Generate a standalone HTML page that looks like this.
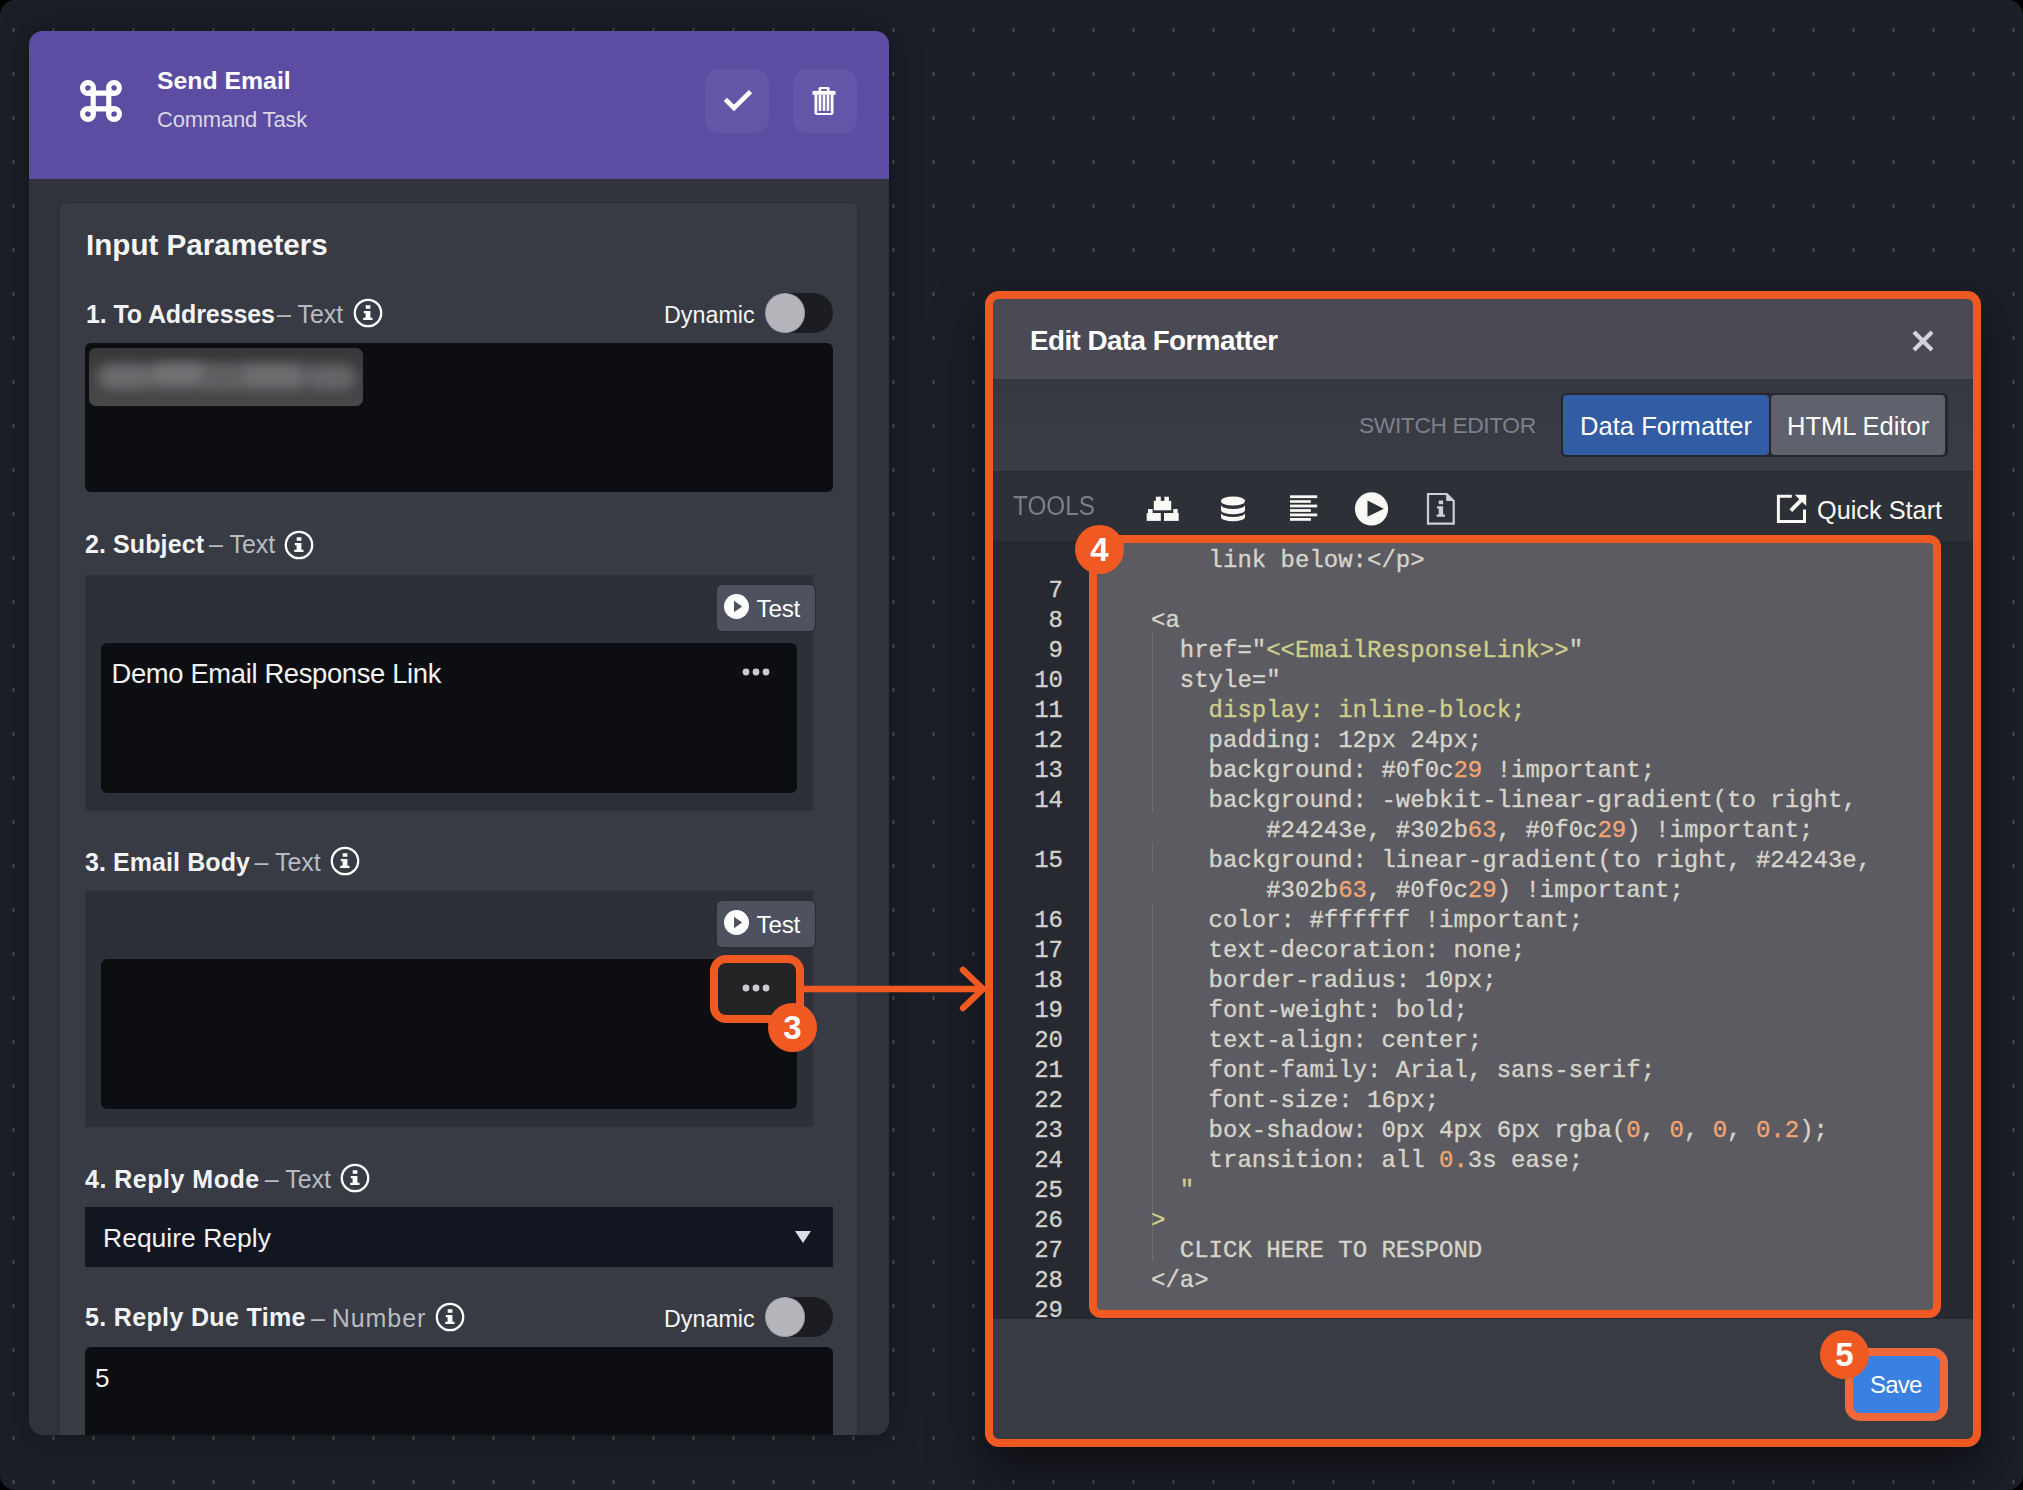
<!DOCTYPE html>
<html><head><meta charset="utf-8">
<style>
html,body{margin:0;padding:0;width:2023px;height:1490px;overflow:hidden;background:#000;}
*{box-sizing:border-box;}
body{font-family:"Liberation Sans",sans-serif;color:#fff;}
#page{position:absolute;left:0;top:0;width:2023px;height:1490px;border-radius:15px;overflow:hidden;background:#1c1f28;}
#dots{position:absolute;left:0;top:0;width:2023px;height:1490px;
 background:repeating-linear-gradient(90deg,transparent 0 12px,rgba(76,76,72,.55) 12px 13px,#4c4c48 13px 14px,rgba(76,76,72,.45) 14px 15px,transparent 15px 40px);
 -webkit-mask-image:repeating-linear-gradient(180deg,transparent 0 28px,#000 28px 32px,transparent 32px 44px);
 mask-image:repeating-linear-gradient(180deg,transparent 0 28px,#000 28px 32px,transparent 32px 44px);}
.a{position:absolute;}
.t{position:absolute;white-space:pre;line-height:1;}
/* left panel */
#lp{left:29px;top:31px;width:860px;height:1404px;border-radius:14px;overflow:hidden;background:#30333b;box-shadow:0 0 30px rgba(0,0,0,.35);}
#lph{left:0;top:0;width:860px;height:148px;background:#5c4da3;}
.hbtn{top:38px;width:64px;height:64px;border-radius:14px;background:rgba(255,255,255,.055);}
#card{left:30px;top:171px;width:799px;height:1300px;background:#383b44;border-radius:6px;border:1.5px solid #2c2f37;}
.lbl{font-weight:bold;font-size:25px;color:#f3f3f5;}
.typ{font-size:25px;color:#b9bbc1;font-weight:normal;}
.inp{background:#0d0e12;border-radius:6px;}
.cont{background:#2d3039;}
.testb{width:98px;height:46px;background:#4d525e;border-radius:5px;box-shadow:0 0 0 1px #2a2c33;}
.dyn{font-size:23.3px;color:#f5f5f7;}
.tog{width:68px;height:40px;border-radius:20px;background:#1c1d21;}
.knob{left:0;top:0;width:40px;height:40px;border-radius:20px;background:#b4b6bc;box-shadow:inset 0 0 0 1px rgba(0,0,0,.12);}
.badge{width:49px;height:49px;border-radius:50%;background:#f05a22;color:#fff;font-weight:bold;font-size:33px;text-align:center;line-height:50px;}
/* modal */
#modal{left:985px;top:291px;width:996px;height:1156px;border:8px solid #f05a22;border-radius:14px;overflow:hidden;background:#393b42;box-shadow:0 24px 50px 0 rgba(0,0,0,.55);}
.code{font-family:"Liberation Mono",monospace;font-size:24px;color:#d6d4cb;-webkit-text-stroke:0.35px currentColor;}
.ln{font-family:"Liberation Mono",monospace;font-size:24px;color:#d2d1cb;text-align:right;width:60px;-webkit-text-stroke:0.35px currentColor;}
.y{color:#cfcf8b;}
.o{color:#f1a573;}
</style></head><body>
<div id="page">
<div id="dots"></div>

<!-- LEFT PANEL -->
<div id="lp" class="a">
  <div id="lph" class="a"></div>
  <!-- command icon -->
  <svg class="a" style="left:0;top:0" width="200" height="150" viewBox="29 31 200 150">
    <g fill="none" stroke="#fff" stroke-width="5.2">
      <circle cx="88" cy="88" r="5.4"/><circle cx="114" cy="88" r="5.4"/>
      <circle cx="88" cy="114" r="5.4"/><circle cx="114" cy="114" r="5.4"/>
      <path d="M93.2 88V114M108.8 88V114M88 93.2H114M88 108.8H114"/>
    </g>
  </svg>
  <div class="t" style="left:128px;top:38px;font-weight:bold;font-size:24.8px;color:#fff;">Send Email</div>
  <div class="t" style="left:128px;top:78px;font-size:22px;color:#d9d7e3;letter-spacing:-0.2px;">Command Task</div>
  <div class="a hbtn" style="left:676px;"></div>
  <div class="a hbtn" style="left:764px;"></div>

  <div id="card" class="a"></div>
</div>

<!-- left panel contents in page coords -->
<div class="a" style="left:0;top:0;width:889px;height:1435px;overflow:hidden;">
  <!-- header icons -->
  <svg class="a" style="left:705px;top:69px" width="64" height="64" viewBox="705 69 64 64">
    <path d="M725.4 99.4L734 108L750.5 91.6" fill="none" stroke="#fff" stroke-width="4.6"/>
  </svg>
  <svg class="a" style="left:793px;top:69px" width="64" height="64" viewBox="793 69 64 64">
    <g fill="#fff">
      <rect x="812.5" y="90.9" width="23" height="3.9"/>
      <path d="M818.5 91V88.6a1.6 1.6 0 0 1 1.6-1.6h8a1.6 1.6 0 0 1 1.6 1.6V91h-2.9V89.1h-5.5V91z"/>
      <path d="M814.5 94.8h2.6V112.9H831V94.8h2.5V113.1a1.8 1.8 0 0 1-1.8 1.8H816.3a1.8 1.8 0 0 1-1.8-1.8z"/>
      <rect x="819" y="94.8" width="2" height="16.1"/>
      <rect x="823.05" y="94.8" width="2.05" height="16.1"/>
      <rect x="827" y="94.8" width="2" height="16.1"/>
    </g>
    <g fill="rgba(255,255,255,0.32)">
      <rect x="817.1" y="94.8" width="1.9" height="16.3"/><rect x="821" y="94.8" width="2.05" height="16.3"/><rect x="825.1" y="94.8" width="1.9" height="16.3"/><rect x="829" y="94.8" width="2" height="16.3"/>
    </g>
  </svg>

  <div class="t lbl" style="left:86px;top:302px;letter-spacing:-0.1px;">1. To Addresses</div>
  <div class="t typ" style="left:277px;top:302px;">– Text</div>
  <svg class="a" style="left:353px;top:298px" width="30" height="30" viewBox="0 0 30 30"><circle cx="15" cy="15" r="13.2" fill="none" stroke="#fff" stroke-width="2.3"/><path d="M12.7 7.2h4.7v3.6h-4.7zM10.8 13h6.6v6.8h2.1v2.3h-9.3v-2.3h2.4v-4.5h-1.8z" fill="#fff"/></svg>
  <div class="t lbl" style="left:85px;top:532px;letter-spacing:0.1px;">2. Subject</div>
  <div class="t typ" style="left:209px;top:532px;">– Text</div>
  <svg class="a" style="left:284px;top:529.7px" width="30" height="30" viewBox="0 0 30 30"><circle cx="15" cy="15" r="13.2" fill="none" stroke="#fff" stroke-width="2.3"/><path d="M12.7 7.2h4.7v3.6h-4.7zM10.8 13h6.6v6.8h2.1v2.3h-9.3v-2.3h2.4v-4.5h-1.8z" fill="#fff"/></svg>
  <div class="t lbl" style="left:85px;top:850px;letter-spacing:0.08px;">3. Email Body</div>
  <div class="t typ" style="left:254.5px;top:850px;">– Text</div>
  <svg class="a" style="left:330.4px;top:845.8px" width="30" height="30" viewBox="0 0 30 30"><circle cx="15" cy="15" r="13.2" fill="none" stroke="#fff" stroke-width="2.3"/><path d="M12.7 7.2h4.7v3.6h-4.7zM10.8 13h6.6v6.8h2.1v2.3h-9.3v-2.3h2.4v-4.5h-1.8z" fill="#fff"/></svg>
  <div class="t lbl" style="left:85px;top:1167px;letter-spacing:0.5px;">4. Reply Mode</div>
  <div class="t typ" style="left:264.8px;top:1167px;">– Text</div>
  <svg class="a" style="left:339.6px;top:1162.6px" width="30" height="30" viewBox="0 0 30 30"><circle cx="15" cy="15" r="13.2" fill="none" stroke="#fff" stroke-width="2.3"/><path d="M12.7 7.2h4.7v3.6h-4.7zM10.8 13h6.6v6.8h2.1v2.3h-9.3v-2.3h2.4v-4.5h-1.8z" fill="#fff"/></svg>
  <div class="t lbl" style="left:85px;top:1305px;letter-spacing:0.35px;">5. Reply Due Time</div>
  <div class="t typ" style="left:311px;top:1306px;">– <span style="letter-spacing:0.9px">Number</span></div>
  <svg class="a" style="left:434.5px;top:1302px" width="30" height="30" viewBox="0 0 30 30"><circle cx="15" cy="15" r="13.2" fill="none" stroke="#fff" stroke-width="2.3"/><path d="M12.7 7.2h4.7v3.6h-4.7zM10.8 13h6.6v6.8h2.1v2.3h-9.3v-2.3h2.4v-4.5h-1.8z" fill="#fff"/></svg>
  <div class="t" style="left:86px;top:230px;font-weight:bold;font-size:29.6px;color:#f5f5f7;">Input Parameters</div>

  <!-- 1 -->
  <div class="t dyn" style="left:664px;top:304px;">Dynamic</div>
  <div class="a tog" style="left:765px;top:293px;"><div class="a knob"></div></div>
  <div class="a inp" style="left:85px;top:343px;width:748px;height:149px;"></div>
  <div class="a" style="left:89px;top:348px;width:274px;height:58px;border-radius:7px;background:linear-gradient(#38383b,#434346 60%,#48484b);overflow:hidden;">
    <div class="a" style="left:8px;top:17px;width:258px;height:24px;background:#5f5f62;filter:blur(6px);border-radius:10px;"></div>
    <div class="a" style="left:14px;top:20px;width:48px;height:18px;background:#6c6c6f;filter:blur(6px);border-radius:9px;"></div>
    <div class="a" style="left:62px;top:16px;width:56px;height:20px;background:#727275;filter:blur(6px);border-radius:9px;"></div>
    <div class="a" style="left:150px;top:18px;width:64px;height:20px;background:#6e6e71;filter:blur(6px);border-radius:9px;"></div>
    <div class="a" style="left:222px;top:22px;width:40px;height:16px;background:#666669;filter:blur(6px);border-radius:9px;"></div>
    <div class="a" style="left:112px;top:20px;width:44px;height:18px;background:#606063;filter:blur(6px);border-radius:9px;"></div>
  </div>

  <!-- 2 -->
  <div class="a cont" style="left:85px;top:575px;width:728px;height:236px;"></div>
  <div class="a testb" style="left:717px;top:585px;"></div>
  <svg class="a" style="left:724px;top:594px" width="25" height="25" viewBox="0 0 25 25"><circle cx="12.5" cy="12.5" r="12.5" fill="#fff"/><path d="M10 6.8L18.2 12.5L10 18.2z" fill="#4d525e"/></svg>
  <div class="t" style="left:756.5px;top:597px;font-size:24.3px;letter-spacing:-0.25px;color:#fff;">Test</div>
  <div class="a inp" style="left:101px;top:643px;width:696px;height:150px;"></div>
  <div class="t" style="left:111.5px;top:660px;font-size:27.4px;letter-spacing:-0.35px;color:#f2f2f4;">Demo Email Response Link</div>
  <svg class="a" style="left:740px;top:665px" width="32" height="14" viewBox="0 0 32 14"><g fill="#c9cbd1"><circle cx="6" cy="7" r="3.4"/><circle cx="16" cy="7" r="3.4"/><circle cx="26" cy="7" r="3.4"/></g></svg>

  <!-- 3 -->
  <div class="a cont" style="left:85px;top:891px;width:728px;height:236px;"></div>
  <div class="a testb" style="left:717px;top:901px;"></div>
  <svg class="a" style="left:724px;top:910px" width="25" height="25" viewBox="0 0 25 25"><circle cx="12.5" cy="12.5" r="12.5" fill="#fff"/><path d="M10 6.8L18.2 12.5L10 18.2z" fill="#4d525e"/></svg>
  <div class="t" style="left:756.5px;top:913px;font-size:24.3px;letter-spacing:-0.25px;color:#fff;">Test</div>
  <div class="a inp" style="left:101px;top:959px;width:696px;height:150px;"></div>

  <!-- 4 -->
  <div class="a" style="left:85px;top:1207px;width:748px;height:60px;background:#121620;"></div>
  <div class="t" style="left:103px;top:1225px;font-size:26.5px;color:#f2f2f4;">Require Reply</div>
  <svg class="a" style="left:794px;top:1230px" width="18" height="14" viewBox="0 0 18 14"><path d="M1 1H17L9 13z" fill="#dcdde2"/></svg>

  <!-- 5 -->
  <div class="t dyn" style="left:664px;top:1308px;">Dynamic</div>
  <div class="a tog" style="left:765px;top:1297px;"><div class="a knob"></div></div>
  <div class="a inp" style="left:85px;top:1347px;width:748px;height:150px;"></div>
  <div class="t" style="left:95px;top:1365px;font-size:26px;color:#f2f2f4;">5</div>
</div>

<!-- step 3 highlight -->
<div class="a" style="left:710px;top:955px;width:94px;height:68px;border:8px solid #f05a22;border-radius:16px;background:#232326;"></div>
<svg class="a" style="left:740px;top:981px" width="32" height="14" viewBox="0 0 32 14"><g fill="#c9cbd1"><circle cx="6" cy="7" r="3.4"/><circle cx="16" cy="7" r="3.4"/><circle cx="26" cy="7" r="3.4"/></g></svg>
<div class="a badge" style="left:768px;top:1003px;">3</div>
<svg class="a" style="left:800px;top:960px;z-index:5" width="200" height="60" viewBox="800 960 200 60"><path d="M802 989H983M963 970L983 989L963 1008" fill="none" stroke="#f05a22" stroke-width="6.5" stroke-linecap="round" stroke-linejoin="round"/></svg>

<!-- MODAL -->
<div id="modal" class="a">
  <!-- inner coords: origin at 993,299 -->
  <div class="a" style="left:0;top:0;width:980px;height:80px;background:#4a4a54;"></div>
  <div class="t" style="left:37px;top:28px;font-weight:bold;font-size:27.8px;letter-spacing:-0.55px;color:#fff;">Edit Data Formatter</div>
  <svg class="a" style="left:918px;top:30px" width="24" height="24" viewBox="0 0 24 24"><path d="M3 3L21 21M21 3L3 21" stroke="#d4d4d8" stroke-width="4.2"/></svg>
  <div class="a" style="left:0;top:80px;width:980px;height:92px;background:linear-gradient(#363841,#3b3d46);"></div>
  <div class="t" style="left:366px;top:115px;font-size:22.8px;letter-spacing:-0.4px;color:#7d8089;">SWITCH EDITOR</div>
  <div class="a" style="left:568px;top:94px;width:387px;height:64px;background:#25272d;border-radius:5px;"></div>
  <div class="a" style="left:570px;top:96px;width:206px;height:60px;background:#325ca3;border-radius:4px;"></div>
  <div class="a" style="left:778px;top:96px;width:174px;height:60px;background:#5f626c;border-radius:4px;"></div>
  <div class="t" style="left:587px;top:115px;font-size:25.6px;color:#fff;">Data Formatter</div>
  <div class="t" style="left:794px;top:115px;font-size:25.5px;color:#fff;">HTML Editor</div>
  <div class="a" style="left:0;top:172px;width:980px;height:2px;background:#2a2c33;"></div>
  <div class="a" style="left:0;top:174px;width:980px;height:68px;background:#2e3038;"></div>
  <div class="t" style="left:20px;top:196px;font-size:24.3px;color:#7c7f88;transform:scaleY(1.17);transform-origin:0 20.6px;">TOOLS</div>
  <!-- toolbar icons (page coords via svg viewBox) -->
  <svg class="a" style="left:140px;top:188px" width="330" height="44" viewBox="1133 487 330 44">
    <g fill="#faf8f4">
      <rect x="1153.8" y="500.8" width="17.4" height="9.5"/>
      <rect x="1155.9" y="496.7" width="4.9" height="4.5"/><rect x="1164.4" y="496.7" width="4.5" height="4.5"/>
      <rect x="1146.7" y="513" width="14.1" height="7.9"/><rect x="1148" y="509" width="4.6" height="4.4"/>
      <rect x="1164" y="513" width="14.7" height="7.9"/><rect x="1173.3" y="509" width="4.4" height="4.4"/>
      <path d="M1221 500.7a12 4.3 0 0 1 24 0v0.6a12 4.3 0 0 1 -24 0z"/>
      <path d="M1221 504.7a12 4.3 0 0 0 24 0v5.3a12 4.3 0 0 1 -24 0z"/>
      <path d="M1221 512.7a12 4.3 0 0 0 24 0v4.3a12 4.3 0 0 1 -24 0z"/>
      <rect x="1290" y="495.3" width="27.2" height="2.8"/><rect x="1290" y="500.2" width="20.9" height="2.6"/>
      <rect x="1290" y="504.6" width="27.2" height="2.8"/><rect x="1290" y="509.1" width="20.9" height="2.8"/>
      <rect x="1290" y="513.5" width="27.2" height="2.8"/><rect x="1290" y="518" width="20.9" height="2.8"/>
      <circle cx="1371.5" cy="508.9" r="16.6"/>
    </g>
    <path d="M1367.5 500.5L1383.8 508.7L1367.5 516.8z" fill="#2e3038"/>
    <path d="M1428 494h18.7l7 7V523.6h-25.7z" fill="none" stroke="#cfcfd3" stroke-width="2.2"/>
    <path d="M1446.2 493.5v7.5h7.5" fill="#cfcfd3"/>
    <path d="M1438.7 500.5h4.4v3.7h-4.4zM1437 506.3h6.1v8.2h1.9v2.3h-8.4v-2.3h2.1v-5.9h-1.7z" fill="#cfcfd3"/>
  </svg>
  <svg class="a" style="left:780px;top:192px" width="36" height="36" viewBox="1773 491 36 36">
    <path d="M1791.8 496.2H1778.4V521.5H1804.5V509.6" fill="none" stroke="#faf8f4" stroke-width="3"/>
    <path d="M1794.8 494.7H1806.2V506.1z" fill="#faf8f4"/><path d="M1790.8 510.6L1801.5 499.9" stroke="#faf8f4" stroke-width="3.9"/>
  </svg>
  <div class="t" style="left:824px;top:199px;font-size:25.3px;color:#faf8f4;">Quick Start</div>
  <!-- code area -->
  <div class="a" style="left:0;top:242px;width:980px;height:778px;background:#272931;"></div>
  <div class="a" style="left:96px;top:236px;width:852px;height:783px;border:8px solid #f05a22;border-radius:12px;background:#5c5b61;"></div>
</div>
<!-- code text page coords -->
<div class="a" style="left:993px;top:541px;width:980px;height:777px;overflow:hidden;">
 <div class="a" style="left:159px;top:92px;width:0;border-left:1.5px dotted rgba(200,200,150,.35);height:178px;"></div>
 <div class="a" style="left:159px;top:303px;width:0;border-left:1.5px dotted rgba(200,200,150,.35);height:27px;"></div>
 <div class="a" style="left:159px;top:363px;width:0;border-left:1.5px dotted rgba(200,200,150,.35);height:357px;"></div>
<div class="t code" style="left:215.6px;top:8px;">link below:&lt;/p&gt;</div>
<div class="t ln" style="left:10px;top:38px;">7</div>
<div class="t ln" style="left:10px;top:68px;">8</div>
<div class="t code" style="left:158.0px;top:68px;">&lt;a</div>
<div class="t ln" style="left:10px;top:98px;">9</div>
<div class="t code" style="left:186.8px;top:98px;">href="<span class="y">&lt;&lt;EmailResponseLink&gt;&gt;</span>"</div>
<div class="t ln" style="left:10px;top:128px;">10</div>
<div class="t code" style="left:186.8px;top:128px;">style="</div>
<div class="t ln" style="left:10px;top:158px;">11</div>
<div class="t code" style="left:215.6px;top:158px;"><span class="y">display: inline-block;</span></div>
<div class="t ln" style="left:10px;top:188px;">12</div>
<div class="t code" style="left:215.6px;top:188px;">padding: 12px 24px;</div>
<div class="t ln" style="left:10px;top:218px;">13</div>
<div class="t code" style="left:215.6px;top:218px;">background: #0f0c<span class="o">29</span> !important;</div>
<div class="t ln" style="left:10px;top:248px;">14</div>
<div class="t code" style="left:215.6px;top:248px;">background: -webkit-linear-gradient(to right,</div>
<div class="t code" style="left:273.2px;top:278px;">#24243e, #302b<span class="o">63</span>, #0f0c<span class="o">29</span>) !important;</div>
<div class="t ln" style="left:10px;top:308px;">15</div>
<div class="t code" style="left:215.6px;top:308px;">background: linear-gradient(to right, #24243e,</div>
<div class="t code" style="left:273.2px;top:338px;">#302b<span class="o">63</span>, #0f0c<span class="o">29</span>) !important;</div>
<div class="t ln" style="left:10px;top:368px;">16</div>
<div class="t code" style="left:215.6px;top:368px;">color: #ffffff !important;</div>
<div class="t ln" style="left:10px;top:398px;">17</div>
<div class="t code" style="left:215.6px;top:398px;">text-decoration: none;</div>
<div class="t ln" style="left:10px;top:428px;">18</div>
<div class="t code" style="left:215.6px;top:428px;">border-radius: 10px;</div>
<div class="t ln" style="left:10px;top:458px;">19</div>
<div class="t code" style="left:215.6px;top:458px;">font-weight: bold;</div>
<div class="t ln" style="left:10px;top:488px;">20</div>
<div class="t code" style="left:215.6px;top:488px;">text-align: center;</div>
<div class="t ln" style="left:10px;top:518px;">21</div>
<div class="t code" style="left:215.6px;top:518px;">font-family: Arial, sans-serif;</div>
<div class="t ln" style="left:10px;top:548px;">22</div>
<div class="t code" style="left:215.6px;top:548px;">font-size: 16px;</div>
<div class="t ln" style="left:10px;top:578px;">23</div>
<div class="t code" style="left:215.6px;top:578px;">box-shadow: 0px 4px 6px rgba(<span class="o">0</span>, <span class="o">0</span>, <span class="o">0</span>, <span class="o">0.2</span>);</div>
<div class="t ln" style="left:10px;top:608px;">24</div>
<div class="t code" style="left:215.6px;top:608px;">transition: all <span class="o">0.</span>3s ease;</div>
<div class="t ln" style="left:10px;top:638px;">25</div>
<div class="t code" style="left:186.8px;top:638px;"><span class="y">"</span></div>
<div class="t ln" style="left:10px;top:668px;">26</div>
<div class="t code" style="left:158.0px;top:668px;"><span class="y">&gt;</span></div>
<div class="t ln" style="left:10px;top:698px;">27</div>
<div class="t code" style="left:186.8px;top:698px;">CLICK HERE TO RESPOND</div>
<div class="t ln" style="left:10px;top:728px;">28</div>
<div class="t code" style="left:158.0px;top:728px;">&lt;/a&gt;</div>
<div class="t ln" style="left:10px;top:758px;">29</div>
</div>
<div class="a badge" style="left:1075px;top:525px;">4</div>
<!-- save -->
<div class="a" style="left:1845px;top:1348px;width:103px;height:73px;border:8px solid #ee683a;border-radius:15px;background:#3a80e0;"></div>
<div class="t" style="left:1870px;top:1373px;font-size:24px;letter-spacing:-0.8px;color:#fff;">Save</div>
<div class="a badge" style="left:1820px;top:1330px;">5</div>

</div>
</body></html>
